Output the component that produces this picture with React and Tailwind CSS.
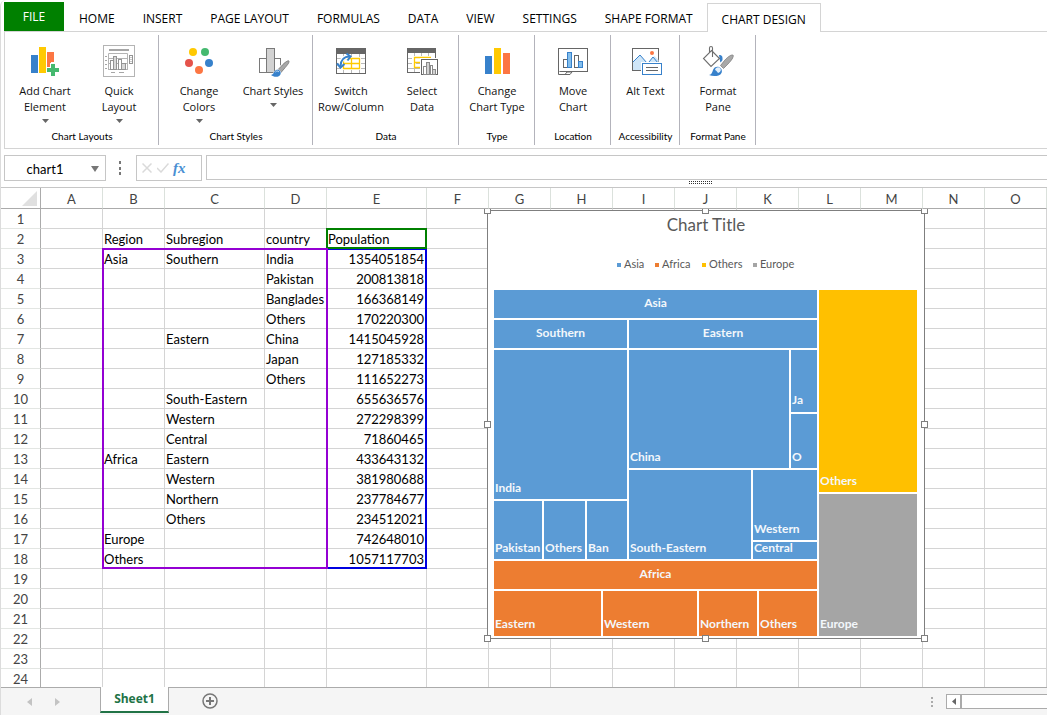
import React from "react";

const GRAY = "#666666";
const BLUE = "#3781cb";
const YELLOW = "#ffc902";
const ORANGE = "#fc7643";
const GREEN = "#45b96f";

function Icon({ children }) {
  return (
    <svg width="36" height="34" viewBox="0 0 36 34" fill="none" aria-hidden="true">
      {children}
    </svg>
  );
}

const AddElementIcon = () => (
  <Icon>
    <rect x="4" y="11" width="7" height="18" fill={BLUE} />
    <rect x="12" y="3" width="7" height="26" fill={YELLOW} />
    <path d="M20 8h7v10h-3v5h-4z" fill={ORANGE} />
    <path d="M20 24h2v5h-2z" fill={ORANGE} />
    <path d="M24 20h4v4h4v4h-4v4h-4v-4h-4v-4h4z" fill={GREEN} stroke="#fff" strokeWidth="2" paintOrder="stroke" />
  </Icon>
);

const QuickLayoutIcon = () => (
  <Icon>
    <rect x="2.5" y="1.5" width="31" height="31" stroke="#b4b4b4" />
    <rect x="8" y="5" width="20" height="2" fill="#a6a6a6" />
    <path d="M7.500 9.500h19M26.500 9.500v16M7.500 9.500v16M7 25.500h20M8 14.500h18M8 19.500h18" stroke="#b4b4b4" />
    <path d="M4 12.500h2M4 16.500h2M4 20.500h2M4 24.500h2M10 28.500h4M18 28.500h5" stroke="#a6a6a6" />
    <rect x="9.500" y="16.500" width="3" height="9" fill="#fff" stroke="#949494" />
    <rect x="12.500" y="12.500" width="3" height="13" fill="#d8d8d8" stroke="#949494" />
    <rect x="17.500" y="15.500" width="3" height="10" fill="#fff" stroke="#949494" />
    <rect x="20.500" y="19.500" width="4" height="6" fill="#d8d8d8" stroke="#949494" />
    <rect x="27" y="10" width="6" height="11" fill="#fff" />
    <rect x="28.500" y="11.500" width="3" height="8" fill="#fff" stroke="#949494" />
    <path d="M30 13v1M30 15v1M30 17v1" stroke="#949494" />
  </Icon>
);

const ColorsIcon = () => (
  <Icon>
    <circle cx="12" cy="8" r="4" fill={YELLOW} />
    <circle cx="24" cy="8" r="4" fill={GREEN} />
    <circle cx="8" cy="19" r="4" fill="#e5534b" />
    <circle cx="28" cy="19" r="4" fill={BLUE} />
    <circle cx="18" cy="26" r="4" fill={ORANGE} />
  </Icon>
);

const ChartStylesIcon = () => (
  <Icon>
    <rect x="4.500" y="14.500" width="7" height="14" fill="#fff" stroke="#7a7a7a" />
    <rect x="19.500" y="14.500" width="6" height="14" fill="#fff" stroke="#7a7a7a" />
    <rect x="11.500" y="4.500" width="8" height="24" fill="#d2d2d2" stroke="#7a7a7a" />
    <path d="M34 17c-1-.6-3.500.5-8 5.500l-3 3.500 3 2.500 3-3.500c3.500-4 5.500-6.500 5-8z" fill="#a8a8a8" stroke="#fff" strokeWidth="2.500" paintOrder="stroke" />
    <path d="M34 17c-1-.6-3.500.5-8 5.500l-3 3 3 3 3-3.500c3.500-4 5.500-6.500 5-8z" fill="#a8a8a8" stroke="#777" strokeWidth=".7" />
    <path d="M16 31c2-.5 2.500-1.500 3.500-3.500 1.300-2.300 4.500-2.300 6 .2.800 2-.3 4.300-3 5-2.400.5-4.600-.2-6.500-1.700z" fill={BLUE} stroke="#fff" strokeWidth="1" paintOrder="stroke" />
    <path d="M20.500 28c1-1.300 2.500-1.300 3.500 0" stroke="#cfe4f8" />
  </Icon>
);

const SwitchIcon = () => (
  <Icon>
    <rect x="3.500" y="4.500" width="29" height="25" fill="#fff" stroke={GRAY} />
    <rect x="3" y="4" width="30" height="6" fill={GRAY} />
    <path d="M10.500 10v3M18.500 10v3M26.500 10v3M10.500 26v3M18.500 26v3M26.500 26v3M4 14.500h4M28 14.500h4M4 19.500h2M28 19.500h4M4 24.500h4M28 24.500h4" stroke="#b9b9b9" />
    <path d="M10.500 14.500h16v10h-16zM18.500 14.500v10M10.500 19.500h16" stroke={YELLOW} strokeWidth="1.300" />
    <path d="M7.500 21c0-5 3.500-8.500 9-8.500" stroke="#fff" strokeWidth="4" />
    <path d="M7.500 22c.2-5.500 3.500-9.500 9-9.500" stroke={BLUE} strokeWidth="2" />
    <path d="M4 19.500l3.500 4 4-3.500M13.500 9.500l4 3-3 4" stroke={BLUE} strokeWidth="2" />
  </Icon>
);

const SelectDataIcon = () => (
  <Icon>
    <rect x="3.500" y="4.500" width="28" height="24" fill="#fff" stroke={GRAY} />
    <rect x="3" y="4" width="29" height="5" fill={GRAY} />
    <path d="M10.500 9v3M17.500 9v3M24.500 9v3M10.500 25v3M4 14.500h4M4 19.500h4M4 24.500h12M29 14.500h2M12 19.500h4" stroke="#b9b9b9" />
    <path d="M27 13.500H10.500v10H16M11 18.500h5" stroke={YELLOW} strokeWidth="1.300" />
    <rect x="16" y="14" width="19" height="18" fill="#fff" />
    <rect x="17.500" y="15.500" width="16" height="15" fill="#fff" stroke={GRAY} />
    <rect x="19.500" y="22.500" width="3" height="8" fill="#fff" stroke="#8a8a8a" />
    <rect x="22.500" y="18.500" width="3" height="12" fill="#d2d2d2" stroke="#8a8a8a" />
    <rect x="26.500" y="21.500" width="2" height="9" fill="#fff" stroke="#8a8a8a" />
    <rect x="28.500" y="25.500" width="3" height="5" fill="#d2d2d2" stroke="#8a8a8a" />
  </Icon>
);

const ChangeTypeIcon = () => (
  <Icon>
    <rect x="6" y="12" width="7" height="18" fill={BLUE} />
    <rect x="15" y="4" width="7" height="26" fill={YELLOW} />
    <rect x="24" y="9" width="7" height="21" fill={ORANGE} />
  </Icon>
);

const MoveChartIcon = () => (
  <Icon>
    <rect x="3.500" y="4.500" width="29" height="23" fill="#fff" stroke={GRAY} />
    <rect x="8.500" y="15.500" width="4" height="8" fill="#fff" stroke={GRAY} />
    <rect x="12.500" y="8.500" width="4" height="15" fill="#83beec" stroke={BLUE} />
    <rect x="19.500" y="11.500" width="4" height="12" fill="#fff" stroke={GRAY} />
    <rect x="23.500" y="17.500" width="4" height="6" fill="#83beec" stroke={BLUE} />
    <path d="M3.500 27v3.500H10l2-2.500h5l-2 2.500h-5" fill="#fff" stroke={GRAY} />
  </Icon>
);

const AltTextIcon = () => (
  <Icon>
    <rect x="4.500" y="4.500" width="26" height="22" fill="#fff" stroke={GRAY} />
    <path d="M5 18l7-7 8 9 3-5 3.500-3 4 4v10H5z" fill="#cfe6f8" />
    <path d="M5 18l7-7 7 8M21 18l4-5 5 6" stroke={BLUE} />
    <circle cx="24" cy="9" r="2" fill={ORANGE} />
    <rect x="13" y="18" width="22" height="13" fill="#fff" />
    <rect x="14.500" y="19.500" width="19" height="11" fill="#fff" stroke={BLUE} />
    <path d="M18 23.500h12M18 26.500h12" stroke={GRAY} />
  </Icon>
);

const FormatPaneIcon = () => (
  <Icon>
    <path d="M19 11c3 0 4 1.500 3.300 6l-2 1.500z" fill={BLUE} />
    <path d="M11.500 6.500l8 8-8.500 8L3.500 14.500z" fill="#fff" stroke="#6e6e6e" strokeWidth="1.100" />
    <path d="M9.500 8V4c0-2 3-2 3 0v9" stroke="#6e6e6e" strokeWidth="1.100" />
    <path d="M33 11c-1.500-.5-4.500 1-8.500 5.500l-4 5 3 3 4.500-4.500c4.500-4.500 6-8 5-9z" fill="#a8a8a8" stroke="#fff" strokeWidth="3" paintOrder="stroke" />
    <path d="M33 11c-1.500-.5-4.500 1-8.500 5.500l-4 5 3 3 4.500-4.500c4.500-4.500 6-8 5-9z" fill="#a8a8a8" stroke="#777" strokeWidth=".6" />
    <path d="M9 31c2.500-.5 3-2 4-5 1.200-3.500 5.500-4.500 8-1.500 2 2.800.5 6-2.500 7-3 .9-6.500.7-9.500-.5z" fill={BLUE} />
    <path d="M15 26c.5-3 4-3.500 5.500-1.500 1 2-.5 4-2.500 4.500-1-1.500-1.500-2.300-3-3z" fill="#e4f0fb" />
  </Icon>
);

const GROUPS = [
  {
    label: "Chart Layouts", width: "w-[154px]",
    items: [
      { lines: ["Add Chart", "Element"], icon: AddElementIcon, arrow: true, width: "w-[74px]" },
      { lines: ["Quick", "Layout"], icon: QuickLayoutIcon, arrow: true, width: "w-[74px]" },
    ],
  },
  {
    label: "Chart Styles", width: "w-[154px]",
    items: [
      { lines: ["Change", "Colors"], icon: ColorsIcon, arrow: true, width: "w-[74px]" },
      { lines: ["Chart Styles"], icon: ChartStylesIcon, arrow: true, width: "w-[74px]" },
    ],
  },
  {
    label: "Data", width: "w-[146px]",
    items: [
      { lines: ["Switch", "Row/Column"], icon: SwitchIcon, width: "w-[72px]" },
      { lines: ["Select", "Data"], icon: SelectDataIcon, width: "w-[70px]" },
    ],
  },
  { label: "Type", width: "w-[76px]", items: [{ lines: ["Change", "Chart Type"], icon: ChangeTypeIcon, width: "w-[74px]" }] },
  { label: "Location", width: "w-[76px]", items: [{ lines: ["Move", "Chart"], icon: MoveChartIcon, width: "w-[74px]" }] },
  { label: "Accessibility", width: "w-[69px]", items: [{ lines: ["Alt Text"], icon: AltTextIcon, width: "w-[66px]" }] },
  { label: "Format Pane", width: "w-[76px]", items: [{ lines: ["Format", "Pane"], icon: FormatPaneIcon, width: "w-[74px]" }] },
];

const TABS = ["HOME", "INSERT", "PAGE LAYOUT", "FORMULAS", "DATA", "VIEW", "SETTINGS", "SHAPE FORMAT"];

function Ribbon() {
  return (
    <header className="ml-1 pt-0.5">
      <nav className="flex h-[30px] items-end border-b border-[#d4d4d4] text-[12px] text-black" role="tablist">
        <button role="tab" className="h-[29px] w-[60px] bg-[#008000] text-white">FILE</button>
        <div className="flex h-[29px] pl-px">
          {TABS.map((t) => (
            <button key={t} role="tab" className="px-[14px] pt-1 whitespace-nowrap">{t}</button>
          ))}
        </div>
        <button role="tab" aria-selected="true" className="-mb-px h-[29px] w-[114px] border border-b-0 border-[#d4d4d4] bg-white pt-1 whitespace-nowrap">
          CHART DESIGN
        </button>
      </nav>
      <div className="flex h-[117px] items-center border-b border-l border-[#d4d4d4]">
        {GROUPS.map((g) => (
          <section key={g.label} aria-label={g.label} className={`flex h-[110px] flex-col border-r border-[#b3b3bb] pl-px ${g.width}`}>
            <div className="flex flex-1 justify-center">
              {g.items.map(({ lines, icon: Pic, arrow, width }) => (
                <button key={lines.join(" ")} className={`flex flex-col items-center pt-[9px] text-[11px] leading-4 text-[#111] ${width}`}>
                  <Pic />
                  <span className="mt-[5px] flex flex-col items-center whitespace-nowrap">
                    {lines.map((l) => <span key={l}>{l}</span>)}
                  </span>
                  {arrow && (
                    <svg width="7" height="5" viewBox="0 0 7 5" className="mt-1" aria-hidden="true">
                      <path d="M0 0h7L3.500 4z" fill="#666" />
                    </svg>
                  )}
                </button>
              ))}
            </div>
            <div className="pb-px text-center font-['Lato',sans-serif] text-[10px] leading-4 whitespace-nowrap text-black">{g.label}</div>
          </section>
        ))}
      </div>
    </header>
  );
}

function FormulaBar() {
  return (
    <div className="ml-1 flex items-start pt-1.5">
      <div className="flex h-[26px] w-[102px] items-center border border-[#c6c6c6] bg-white pt-0.5">
        <input aria-label="Name box" defaultValue="chart1" className="min-w-0 flex-1 pt-px text-center font-['Lato',sans-serif] text-[13px] text-black outline-none" />
        <button aria-label="Open name list" className="flex w-5 justify-center">
          <svg width="8" height="6" viewBox="0 0 8 6"><path d="M0 0h8L4 6z" fill="#777" /></svg>
        </button>
      </div>
      <svg width="30" height="26" viewBox="0 0 30 26" aria-hidden="true">
        <path d="M13 6h2v3h-2zM13 12h2v3h-2zM13 17h2v3h-2z" fill="#777" />
      </svg>
      <div className="flex h-[26px] w-[66px] items-center border border-[#c6c6c6] pl-[5px]">
        <button aria-label="Cancel" className="flex w-[15px] items-center">
          <svg width="10" height="10" viewBox="0 0 10 10"><path d="M.5.500l9 9M9.500.500l-9 9" stroke="#dadada" strokeWidth="1.500" /></svg>
        </button>
        <button aria-label="Enter" className="flex w-4 items-center">
          <svg width="12" height="10" viewBox="0 0 12 10"><path d="M0 5l4 4L11.500.500" fill="none" stroke="#dadada" strokeWidth="1.500" /></svg>
        </button>
        <button aria-label="Insert function" className="font-['Liberation_Serif',serif] text-[15px] leading-4 font-bold italic text-[#4a8fd3]">fx</button>
      </div>
      <input aria-label="Formula" className="ml-1 h-[25px] min-w-0 flex-1 border border-r-0 border-[#c6c6c6] px-1 outline-none" />
    </div>
  );
}

const COLS = ["A", "B", "C", "D", "E", "F", "G", "H", "I", "J", "K", "L", "M", "N", "O"];
const ROWS = {
  2: ["", "Region", "Subregion", "country", "Population"],
  3: ["", "Asia", "Southern", "India", "1354051854"],
  4: ["", "", "", "Pakistan", "200813818"],
  5: ["", "", "", "Banglades", "166368149"],
  6: ["", "", "", "Others", "170220300"],
  7: ["", "", "Eastern", "China", "1415045928"],
  8: ["", "", "", "Japan", "127185332"],
  9: ["", "", "", "Others", "111652273"],
  10: ["", "", "South-Eastern", "", "655636576"],
  11: ["", "", "Western", "", "272298399"],
  12: ["", "", "Central", "", "71860465"],
  13: ["", "Africa", "Eastern", "", "433643132"],
  14: ["", "", "Western", "", "381980688"],
  15: ["", "", "Northern", "", "237784677"],
  16: ["", "", "Others", "", "234512021"],
  17: ["", "Europe", "", "", "742648010"],
  18: ["", "Others", "", "", "1057117703"],
};

// x1, y1, x2, y2, fill, label, label offset from the bottom edge (or "head" for a centred header)
const TILES = [
  [493, 289, 818, 319, "#5b9bd5", "Asia", "head"], [493, 319, 628, 349, "#5b9bd5", "Southern", "head"],
  [628, 319, 818, 349, "#5b9bd5", "Eastern", "head"], [493, 349, 628, 500, "#5b9bd5", "India", 8],
  [628, 349, 790, 469, "#5b9bd5", "China", 8], [790, 349, 818, 413, "#5b9bd5", "Ja", 9],
  [790, 413, 818, 469, "#5b9bd5", "O", 8], [493, 500, 543, 560, "#5b9bd5", "Pakistan", 8],
  [543, 500, 586, 560, "#5b9bd5", "Others", 8], [586, 500, 628, 560, "#5b9bd5", "Ban", 8],
  [628, 469, 752, 560, "#5b9bd5", "South-Eastern", 8], [752, 469, 818, 541, "#5b9bd5", "Western", 8],
  [752, 541, 818, 560, "#5b9bd5", "Central", 8], [493, 560, 818, 590, "#ed7d31", "Africa", "head"],
  [493, 590, 602, 637, "#ed7d31", "Eastern", 9], [602, 590, 698, 637, "#ed7d31", "Western", 9],
  [698, 590, 758, 637, "#ed7d31", "Northern", 9], [758, 590, 818, 637, "#ed7d31", "Others", 9],
  [818, 289, 918, 493, "#ffc000", "Others", 8], [818, 493, 918, 637, "#a5a5a5", "Europe", 9],
];
const LEGEND = [[617, "#5b9bd5", "Asia"], [655, "#ed7d31", "Africa"], [702, "#ffc000", "Others"], [753, "#a5a5a5", "Europe"]];
const HANDLES = [[488, 211], [706, 211], [925, 211], [488, 425], [925, 425], [488, 639], [706, 639], [925, 639]];

function TreemapChart() {
  return (
    <svg
      role="img" aria-label="Population treemap" width="445" height="434" viewBox="484 209 445 434"
      className="absolute top-[21px] left-[483px] font-['Lato',sans-serif]"
    >
      <rect x="487.500" y="210.500" width="437" height="428" fill="#fff" stroke="#7f7f7f" />
      <text x="706" y="231" fontSize="17" fill="#595959" textAnchor="middle">Chart Title</text>
      {LEGEND.map(([x, color, name]) => (
        <g key={name}>
          <rect x={x} y="263" width="4" height="4" fill={color} />
          <text x={x + 7} y="268" fontSize="11" fill="#595959">{name}</text>
        </g>
      ))}
      {TILES.map(([x1, y1, x2, y2, color, name, place], i) => (
        <g key={i}>
          <rect x={x1} y={y1} width={x2 - x1} height={y2 - y1} fill={color} stroke="#fff" strokeWidth="2" />
          <text
            x={place === "head" ? (x1 + x2) / 2 : x1 + 2}
            y={place === "head" ? y1 + 18 : y2 - place}
            textAnchor={place === "head" ? "middle" : "start"} fontSize="12" fontWeight="700" fill="#f3f7fb"
          >
            {name}
          </text>
        </g>
      ))}
      {HANDLES.map(([x, y]) => (
        <rect key={`${x}-${y}`} x={x - 3.5} y={y - 3.5} width="6" height="6" fill="#fff" stroke="#7f7f7f" />
      ))}
    </svg>
  );
}

function Sheet() {
  return (
    <main className="relative min-h-0 flex-1 overflow-hidden font-['Lato',sans-serif]">
      <table className="w-[1046px] table-fixed border-separate border-spacing-0 text-[13px] leading-[17px]">
        <colgroup>
          <col className="w-[40px]" />
          {COLS.map((c) => <col key={c} className={c === "C" || c === "E" ? "w-[100px]" : "w-[62px]"} />)}
        </colgroup>
        <thead>
          <tr>
            <th className="border-r border-b border-[#ababab] p-0">
              <svg width="16" height="16" viewBox="0 0 16 16" className="ml-auto mr-0.5"><path d="M15 1v15H0z" fill="#e0e0e0" /></svg>
            </th>
            {COLS.map((c) => (
              <th key={c} scope="col" className="h-[21px] border-r border-b border-r-[#dbe1dc] border-b-[#ababab] p-0 pt-[3px] font-normal text-[#444]">{c}</th>
            ))}
          </tr>
        </thead>
        <tbody>
          {Array.from({ length: 24 }, (_, i) => i + 1).map((r) => (
            <tr key={r}>
              <th scope="row" className="h-5 border-r border-b border-r-[#ababab] border-b-[#e3e6e3] p-0 pt-0.5 font-normal text-[#444]">{r}</th>
              {COLS.map((c, j) => (
                <td
                  key={c}
                  className={`h-5 overflow-hidden border-r border-b border-[#d4d4d4] p-0 pt-0.5 pl-px whitespace-nowrap text-black ${j === 4 && r > 2 ? "pr-0.5 text-right" : "text-left"}`}
                >
                  {ROWS[r]?.[j] ?? ""}
                </td>
              ))}
            </tr>
          ))}
        </tbody>
      </table>
      <div className="absolute top-[60px] left-[325px] h-[321px] w-[101px] border-2 border-[#0000e0]" />
      <div className="absolute top-10 left-[325px] h-[21px] w-[101px] border-2 border-[#008000]" />
      <div className="absolute top-[60px] left-[101px] h-[321px] w-[226px] border-2 border-[#9400d3]" />
      <TreemapChart />
    </main>
  );
}

function SheetTabs() {
  return (
    <footer className="flex h-7 shrink-0 items-start border-t border-[#ababab] bg-[#f5f5f5]">
      <div className="flex w-[99px] items-center gap-[22px] pt-2.5 pl-[26px]">
        <button aria-label="Previous sheet"><svg width="6" height="8" viewBox="0 0 6 8" className="block"><path d="M5 0v8L0 4z" fill="#c3c3c3" /></svg></button>
        <button aria-label="Next sheet"><svg width="6" height="8" viewBox="0 0 6 8" className="block"><path d="M0 0v8l5-4z" fill="#c3c3c3" /></svg></button>
      </div>
      <button className="-mt-px h-[26px] w-[69px] border-x border-b-2 border-x-[#ababab] border-b-[#217346] bg-white text-[12px] font-bold text-[#217346]">Sheet1</button>
      <button aria-label="Add sheet" className="mt-[5px] ml-[33px]">
        <svg width="16" height="16" viewBox="0 0 16 16" className="block" fill="none" stroke="#777">
          <circle cx="8" cy="8" r="7" strokeWidth="1.500" />
          <path d="M8 4v8M4 8h8" strokeWidth="2" />
        </svg>
      </button>
      <svg width="4" height="12" viewBox="0 0 4 12" className="mt-2 ml-auto" aria-hidden="true">
        <path d="M1 1h2v2H1zM1 5h2v2H1zM1 9h2v2H1z" fill="#ababab" />
      </svg>
      <div className="mt-1.5 ml-3 flex h-[15px] w-[101px] border border-r-0 border-[#ababab] bg-white">
        <button aria-label="Scroll left" className="flex w-[15px] items-center justify-center border-r-2 border-[#ababab]">
          <svg width="4" height="7" viewBox="0 0 4 7"><path d="M4 0v7L0 3.500z" fill="#666" /></svg>
        </button>
      </div>
    </footer>
  );
}

export default function App() {
  return (
    <div className="flex h-screen flex-col overflow-hidden bg-white font-['Open_Sans',sans-serif]">
      <div className="flex min-h-0 flex-1 flex-col overflow-hidden rounded-tl-md border-l border-[#dcdcdc]">
        <div className="-ml-px shrink-0">
          <Ribbon />
          <FormulaBar />
        </div>
        <div className="flex h-[7px] shrink-0 justify-center border-b border-[#c6c6c6] pl-[354px]">
          <svg width="24" height="5" viewBox="0 0 24 5" aria-hidden="true">
            <path d="M0 .500h24M0 2.500h24" stroke="#333" strokeDasharray="1 1" />
          </svg>
        </div>
        <Sheet />
        <SheetTabs />
      </div>
    </div>
  );
}
